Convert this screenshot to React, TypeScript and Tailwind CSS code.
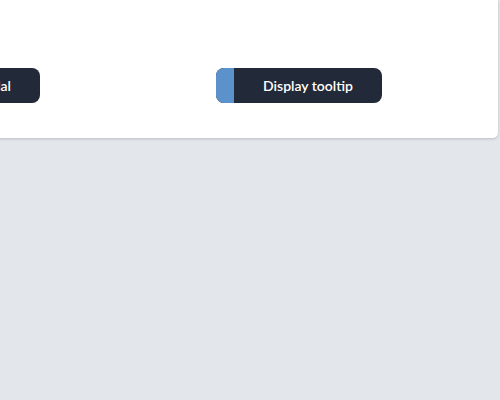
export default function App() {
  return (
    <div className="min-h-[400px] w-[500px] overflow-hidden bg-[#e3e6eb] font-['Lato','Inter',sans-serif]">
      {/* Panel */}
      <div className="-ml-[40px] mr-[2px] h-[138px] rounded-br-[5px] bg-white pt-[68px] shadow-[0_1px_3px_rgba(0,0,0,0.18)]">
        <div className="flex gap-[176px]">
          <button className="flex h-[35px] w-[80px] shrink-0 items-center justify-end whitespace-nowrap rounded-lg bg-[#222938] pr-[29px] text-[14px] font-semibold text-white">
            Open modal
          </button>
          <button className="flex h-[35px] w-[166px] shrink-0 overflow-hidden rounded-lg bg-[#222938] text-[14px] font-semibold text-white">
            <span className="h-full w-[18px] bg-[#5b92cb]" />
            <span className="flex h-full flex-1 items-center justify-center">Display tooltip</span>
          </button>
        </div>
      </div>
    </div>
  );
}
